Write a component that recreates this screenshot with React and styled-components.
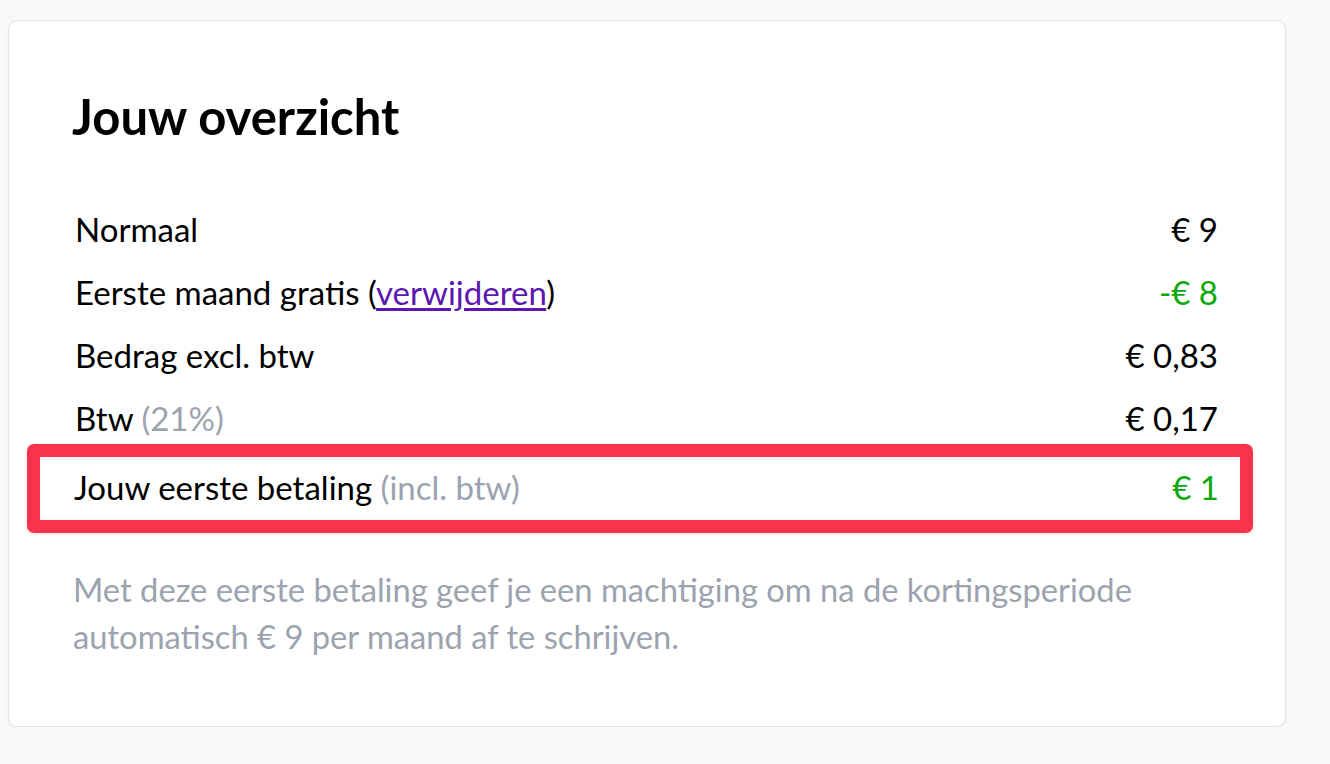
import React from "react";
import styled, { createGlobalStyle } from "styled-components";

const GlobalStyle = createGlobalStyle`
  html, body {
    margin: 0;
    padding: 0;
    background: #f8f9fb;
    font-family: Lato, "Noto Sans", sans-serif;
    color: #000;
  }
`;

const Page = styled.div`
  padding: 20px 0 0 8px;
`;

const Card = styled.div`
  box-sizing: border-box;
  width: 1278px;
  height: 707px;
  background: #fff;
  border: 1px solid #e1e3e8;
  border-radius: 9px;
  box-shadow: 0 1px 3px rgba(0, 0, 0, 0.05);
  padding: 71px 67px 0 66px;
`;

const Title = styled.h1`
  margin: 0 0 57px -3px;
  font-size: 49px;
  line-height: 48px;
  font-weight: 700;
`;

const List = styled.div`
  display: flex;
  flex-direction: column;
`;

const Row = styled.div`
  display: flex;
  justify-content: space-between;
  align-items: center;
  height: 63px;
  font-size: 33px;
  ${(p) =>
    p.$highlight &&
    `
    margin: -5px -35px 0 -48px;
    padding: 0 21px 4px 34px;
    height: 59px;
    border: 13px solid #f8334a;
    border-radius: 7px;
    box-shadow: inset 0 0 6px rgba(0, 0, 0, 0.06), 0 1px 4px rgba(0, 0, 0, 0.12);
  `}
`;

const Muted = styled.span`
  color: #9ca3af;
`;

const Link = styled.a`
  color: #5b17b0;
  text-decoration: underline;
  text-underline-offset: 3px;
`;

const Amount = styled.span`
  color: ${(p) => (p.$green ? "#0aaa0a" : "#000")};
`;

const Note = styled.p`
  margin: 33px 0 0 -2px;
  font-size: 32.7px;
  line-height: 47px;
  color: #9ca3af;
`;

export default function App() {
  return (
    <>
      <GlobalStyle />
      <Page>
        <Card>
          <Title>Jouw overzicht</Title>
          <List>
            <Row>
              <span>Normaal</span>
              <Amount>€ 9</Amount>
            </Row>
            <Row>
              <span>
                Eerste maand gratis (<Link href="#">verwijderen</Link>)
              </span>
              <Amount $green>-€ 8</Amount>
            </Row>
            <Row>
              <span>Bedrag excl. btw</span>
              <Amount>€ 0,83</Amount>
            </Row>
            <Row>
              <span>
                Btw <Muted>(21%)</Muted>
              </span>
              <Amount>€ 0,17</Amount>
            </Row>
            <Row $highlight>
              <span>
                Jouw eerste betaling <Muted>(incl. btw)</Muted>
              </span>
              <Amount $green>€ 1</Amount>
            </Row>
          </List>
          <Note>
            Met deze eerste betaling geef je een machtiging om na de kortingsperiode
            <br />
            automatisch € 9 per maand af te schrijven.
          </Note>
        </Card>
      </Page>
    </>
  );
}
